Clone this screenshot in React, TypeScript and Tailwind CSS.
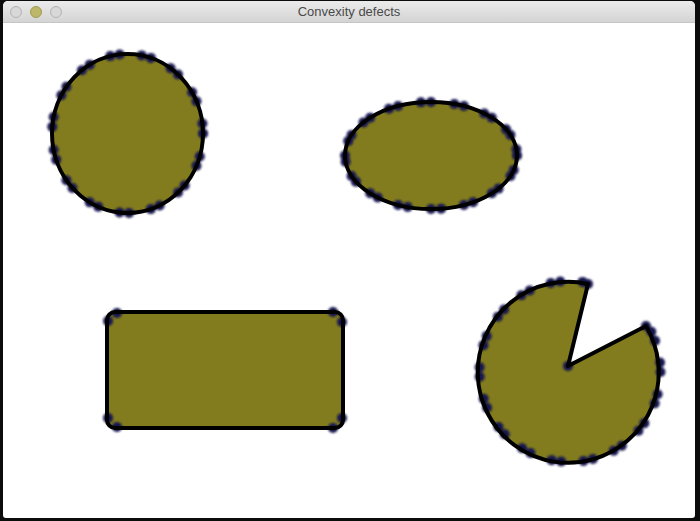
const FILL = "#827c1e";
const DOT = "#16164f";

type Pt = [number, number];

// hull points along an ellipse, a little uneven like the reference
function ellipseDots(cx: number, cy: number, rx: number, ry: number, n: number, from = 0, to = 360): Pt[] {
  const pts: Pt[] = [];
  for (let i = 0; i <= n; i++) {
    const j = i % 2 === 0 ? 0 : 0.4;
    const a = ((from + ((to - from) * (i + j)) / n) * Math.PI) / 180;
    pts.push([cx + rx * Math.cos(a), cy + ry * Math.sin(a)]);
  }
  return pts;
}

const rectDots: Pt[] = [
  [117, 313], [108, 321],
  [333, 312], [342, 322],
  [108, 418], [117, 427],
  [333, 428], [342, 418],
];

const pac = { cx: 570, cy: 371.5, r: 90.5 };
const top: Pt = [588, 284];
const right: Pt = [646, 326];
const vertex: Pt = [568, 366];

const dots: Pt[] = [
  ...ellipseDots(127.5, 133.5, 75.5, 79.5, 30),
  ...ellipseDots(431, 155.5, 86, 53.5, 32),
  ...rectDots,
  ...ellipseDots(pac.cx, pac.cy, pac.r, pac.r, 30, -82, -386),
  top,
  right,
  vertex,
];

const pacPath = `M ${vertex[0]} ${vertex[1]} L ${top[0]} ${top[1]} A ${pac.r} ${pac.r} 0 1 0 ${right[0]} ${right[1]} Z`;

function Canvas() {
  return (
    <svg className="block h-full w-full" viewBox="3 23 692 495">
      <defs>
        <filter id="soft" x="-50%" y="-50%" width="200%" height="200%">
          <feGaussianBlur stdDeviation="0.9" />
        </filter>
      </defs>

      {/* fills */}
      <ellipse cx={127.5} cy={133.5} rx={75.5} ry={79.5} fill={FILL} />
      <ellipse cx={431} cy={155.5} rx={86} ry={53.5} fill={FILL} />
      <rect x={107} y={312} width={236} height={116} rx={8} fill={FILL} />
      <path d={pacPath} fill={FILL} />

      {/* hull points */}
      <g filter="url(#soft)" fill={DOT}>
        {dots.map(([x, y], i) => (
          <circle key={i} cx={x} cy={y} r={5} />
        ))}
      </g>

      {/* contours */}
      <g fill="none" stroke="#000" strokeWidth={4} strokeLinejoin="round">
        <ellipse cx={127.5} cy={133.5} rx={75.5} ry={79.5} />
        <ellipse cx={431} cy={155.5} rx={86} ry={53.5} />
        <rect x={107} y={312} width={236} height={116} rx={8} />
        <path d={pacPath} />
      </g>
    </svg>
  );
}

export default function App() {
  return (
    <div className="h-[521px] w-[700px] bg-[#0c0c0c] pb-[3px] pl-[3px] pr-[5px] pt-[1px]">
      <div className="flex h-full w-full flex-col overflow-hidden rounded-t-[5px] rounded-b-[3px] bg-white">
        <div className="relative flex h-[22px] shrink-0 items-center border-b border-[#c6c6c6] bg-gradient-to-b from-[#ebebeb] to-[#d4d4d4] pl-[7px]">
          <div className="flex gap-[8px]">
            <span className="h-[12px] w-[12px] rounded-full border border-[#b2b2b2] bg-[#d8d8d8]" />
            <span className="h-[12px] w-[12px] rounded-full border border-[#a09a50] bg-[#bdb76a]" />
            <span className="h-[12px] w-[12px] rounded-full border border-[#b2b2b2] bg-[#d8d8d8]" />
          </div>
          <div className="absolute inset-0 flex items-center justify-center font-['Liberation_Sans',Arial,sans-serif] text-[13px] text-[#4a4a4a]">
            Convexity defects
          </div>
        </div>
        <div className="min-h-0 flex-1">
          <Canvas />
        </div>
      </div>
    </div>
  );
}
